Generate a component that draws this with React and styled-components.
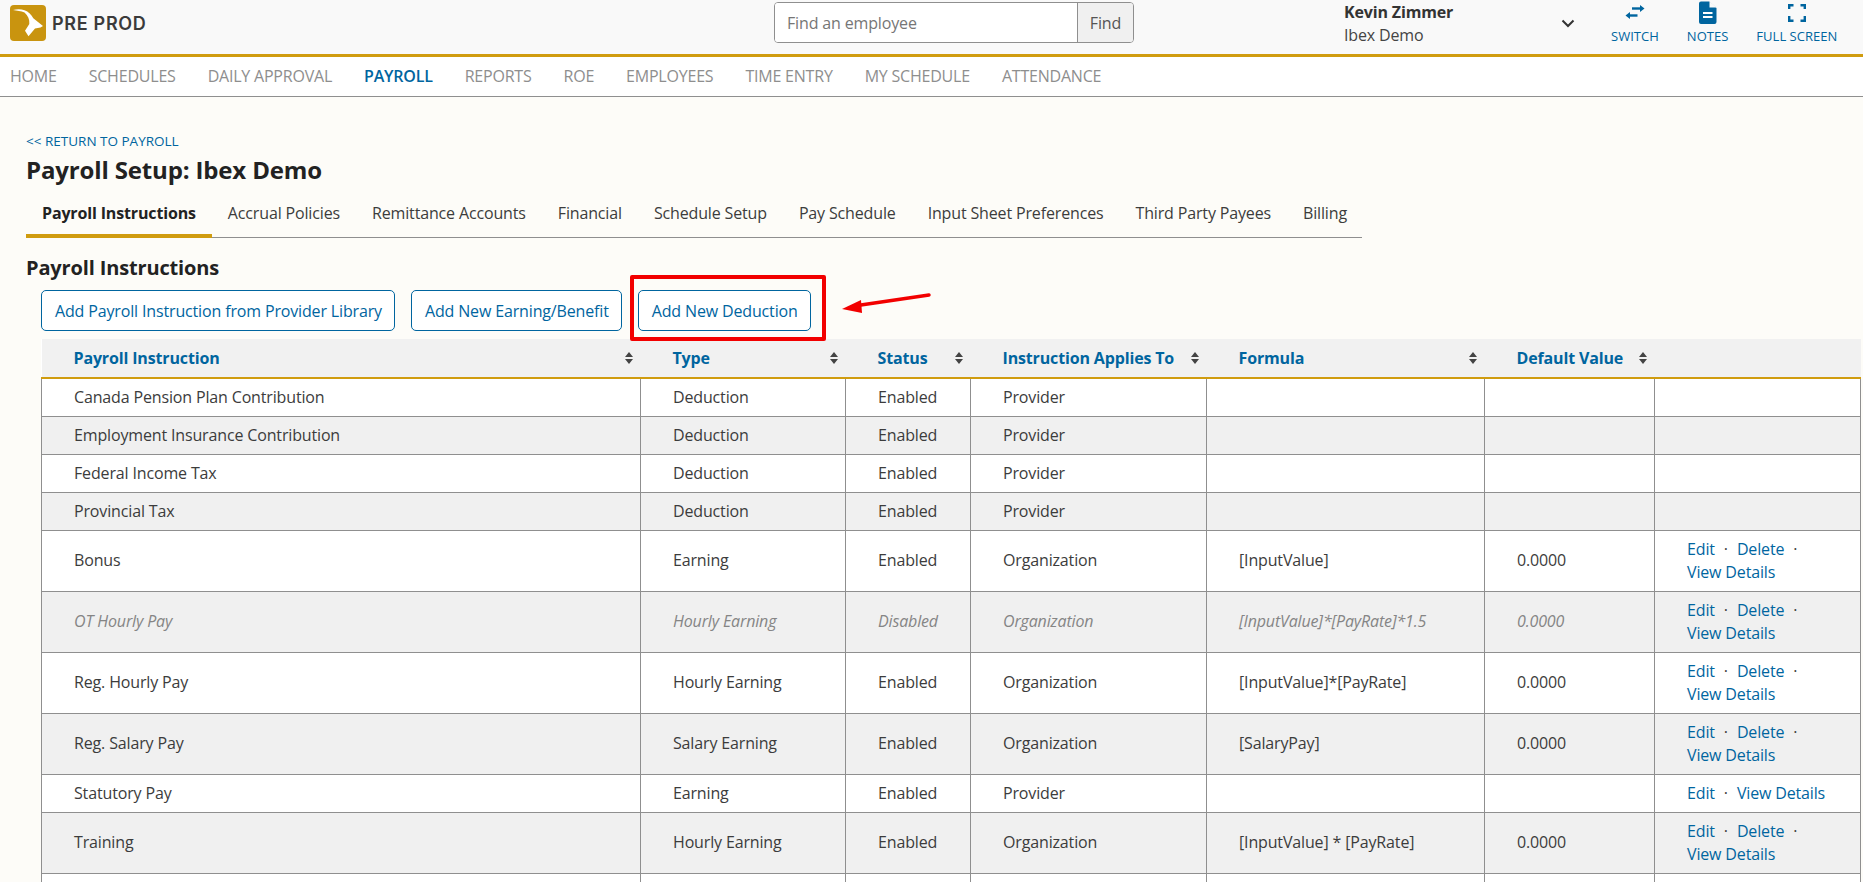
import React from 'react';
import styled, { createGlobalStyle } from 'styled-components';

const GlobalStyle = createGlobalStyle`
  html, body {
    margin: 0;
    height: 100%;
    overflow: hidden;
    background: #fdfcf8;
    font-family: "Open Sans", "Liberation Sans", sans-serif;
    font-size: 16px;
    letter-spacing: -0.15px;
    color: #3c3c3c;
  }
`;

const BLUE = '#00659f';
const GOLD = '#d09c0f';
const LINE = '#8f8f8f';

const TopBar = styled.header`
  display: grid;
  grid-template-columns: 774px 360px 441px 1fr;
  height: 54px;
  background: #f9f9f9;
  border-bottom: 3px solid ${GOLD};
`;

const Brand = styled.div`
  display: flex;
  align-items: center;
  gap: 6px;
  height: 46px;
  padding-left: 10px;
`;

const BrandName = styled.span`
  font-family: "Inter", "Open Sans", sans-serif;
  font-size: 18px;
  font-weight: 600;
  letter-spacing: 0.7px;
  color: #3b3b3b;
`;

const SearchBox = styled.form`
  display: flex;
  height: 39px;
  margin-top: 2px;
  border: 1px solid ${LINE};
  border-radius: 4px;
  overflow: hidden;
  background: #fff;
`;

const SearchInput = styled.input`
  flex: 1;
  min-width: 0;
  border: 0;
  outline: 0;
  padding: 0 12px;
  font: inherit;
  letter-spacing: inherit;
  color: #3c3c3c;
  &::placeholder {
    color: #767676;
    opacity: 1;
  }
`;

const SearchButton = styled.button`
  width: 56px;
  border: 0;
  border-left: 1px solid ${LINE};
  background: #f0f0f0;
  font: inherit;
  letter-spacing: inherit;
  color: #555;
`;

const UserBlock = styled.div`
  display: flex;
  justify-content: space-between;
  align-items: flex-start;
  padding-left: 210px;
`;

const UserName = styled.div`
  font-weight: 700;
  line-height: 23px;
  color: #333;
`;

const UserOrg = styled.div`
  line-height: 23px;
  color: #444;
`;

const UserText = styled.div`
  padding-top: 1px;
`;

const Chevron = styled.svg`
  margin-top: 19px;
`;

const Tools = styled.div`
  display: flex;
  padding-left: 36px;
`;

const Tool = styled.a`
  display: flex;
  flex-direction: column;
  align-items: center;
  margin-right: ${(p) => p.$gap}px;
  font-size: 13px;
  letter-spacing: 0.02px;
  line-height: 18px;
  color: ${BLUE};
  white-space: nowrap;
`;

const ToolIcon = styled.svg`
  display: block;
  height: 27px;
`;

const MainNav = styled.nav`
  display: flex;
  gap: 32px;
  align-items: center;
  height: 37px;
  padding: 0 0 2px 10px;
  background: #fff;
  border-bottom: 1px solid ${LINE};
`;

const NavItem = styled.a`
  font-size: 16px;
  letter-spacing: -0.21px;
  text-transform: uppercase;
  font-weight: ${(p) => (p.$active ? 600 : 400)};
  color: ${(p) => (p.$active ? BLUE : '#8e8e8e')};
`;

const Content = styled.main`
  padding: 35px 0 0 26px;
`;

const BackLink = styled.a`
  display: block;
  font-size: 13.5px;
  letter-spacing: 0;
  line-height: 18px;
  color: ${BLUE};
`;

const PageTitle = styled.h1`
  margin: 2px 0 0;
  font-size: 24px;
  line-height: 36px;
  font-weight: 700;
  color: #222;
`;

const TabBar = styled.div`
  display: flex;
  width: 1336px;
  height: 45px;
  margin-top: 4px;
  border-bottom: 1px solid ${LINE};
`;

const Tab = styled.a`
  display: flex;
  align-items: center;
  padding: 0 16px;
  margin-bottom: -1px;
  white-space: nowrap;
  font-weight: ${(p) => (p.$active ? 700 : 400)};
  color: ${(p) => (p.$active ? '#222' : '#3c3c3c')};
  border-bottom: 4px solid ${(p) => (p.$active ? GOLD : 'transparent')};
`;

const SectionTitle = styled.h2`
  margin: 16px 0 0;
  font-size: 20px;
  line-height: 28px;
  font-weight: 700;
  color: #222;
`;

const ButtonRow = styled.div`
  display: flex;
  gap: 16px;
  align-items: center;
  margin: 8px 0 0 15px;
  height: 41px;
`;

const ActionButton = styled.button`
  position: relative;
  height: 41px;
  padding: 0 12px 0 13px;
  border: 1px solid ${BLUE};
  border-radius: 5px;
  background: #fff;
  font: inherit;
  letter-spacing: inherit;
  color: ${BLUE};
  white-space: nowrap;
  ${(p) =>
    p.$marked &&
    `
    &::after {
      content: '';
      position: absolute;
      left: -9px;
      right: -16px;
      top: -16px;
      bottom: -11px;
      border: 4px solid #f20000;
      border-radius: 2px;
      pointer-events: none;
    }
  `}
`;

const Arrow = styled.svg`
  position: absolute;
  left: 838px;
  top: 289px;
`;

const Table = styled.table`
  width: 1819px;
  margin: 8px 0 0 15px;
  border-collapse: collapse;
  table-layout: fixed;
  background: #fff;
`;

const HeadRow = styled.tr`
  background: #f1f1f1;
  height: 39px;
`;

const HeadCell = styled.th`
  padding: 0 8px 0 32px;
  border-bottom: 2px solid ${GOLD};
  text-align: left;
  font-size: 16px;
  font-weight: 700;
  color: ${BLUE};
`;

const HeadInner = styled.div`
  display: flex;
  align-items: center;
  justify-content: space-between;
`;

const SortGlyph = styled.svg`
  flex: none;
`;

const Row = styled.tr`
  height: ${(p) => p.$h}px;
  background: ${(p) => (p.$alt ? '#f0f0f0' : '#fff')};
  font-style: ${(p) => (p.$off ? 'italic' : 'normal')};
  color: ${(p) => (p.$off ? '#858585' : '#3c3c3c')};
`;

const Cell = styled.td`
  padding: 0 12px 0 32px;
  border: 1px solid ${LINE};
  font-size: 16px;
  line-height: 23px;
  vertical-align: middle;
`;

const LinkText = styled.a`
  color: ${BLUE};
  font-style: normal;
`;

const Dot = styled.span`
  margin: 0 9px;
  color: #3c3c3c;
  font-style: normal;
`;

const SortIcon = () => (
  <SortGlyph width="8" height="12" viewBox="0 0 8 12">
    <path d="M4 0 8 5H0zM4 12 0 7h8z" fill="#444" />
  </SortGlyph>
);

const Logo = () => (
  <svg width="36" height="36" viewBox="0 0 36 36">
    <rect width="36" height="36" rx="4" fill="#c9940f" />
    <path
      d="M3 5C7 4 11 4 14.500 5.200 18.500 6.600 21.500 9.500 23.300 13.300L33 21 30.500 22.500 25 23.500 18.500 31.300 15 25.700 19.300 19C19.800 14.500 18 10.500 14.500 7.500 11 6 7 5.500 3 5z"
      fill="#fff"
    />
  </svg>
);

const SwitchIcon = () => (
  <ToolIcon width="20" viewBox="0 0 20 27">
    <path d="M7 8.500h9" stroke={BLUE} strokeWidth="2.400" />
    <path d="M15 5 19.500 8.500 15 12z" fill={BLUE} />
    <path d="M4 15.500h8.500" stroke={BLUE} strokeWidth="2.400" />
    <path d="M5 12 .5 15.500 5 19z" fill={BLUE} />
  </ToolIcon>
);

const NotesIcon = () => (
  <ToolIcon width="19" viewBox="0 0 19 27">
    <path
      d="M3 1.500h8.500L18.500 8v14a2 2 0 0 1-2 2H3a2 2 0 0 1-2-2V3.500a2 2 0 0 1 2-2z"
      fill={BLUE}
    />
    <path d="M11.500 1v6.500h7z" fill="#f9f9f9" />
    <path d="M5 12h9.500v2H5zM5 16h9.500v2H5z" fill="#fff" />
  </ToolIcon>
);

const FullIcon = () => (
  <ToolIcon width="18" viewBox="0 0 18 27">
    <path
      d="M1.200 9V5.200h4.300M12.500 5.200h4.300V9M16.800 16v4.800h-4.300M5.500 20.800H1.200V16"
      stroke={BLUE}
      strokeWidth="2.400"
      fill="none"
    />
  </ToolIcon>
);

const columns = [
  { label: 'Payroll Instruction', width: 599 },
  { label: 'Type', width: 205 },
  { label: 'Status', width: 125 },
  { label: 'Instruction Applies To', width: 236 },
  { label: 'Formula', width: 278 },
  { label: 'Default Value', width: 170 },
  { label: '', width: 206 },
];

const rows = [
  ['Canada Pension Plan Contribution', 'Deduction', 'Enabled', 'Provider', '', '', null, 38],
  ['Employment Insurance Contribution', 'Deduction', 'Enabled', 'Provider', '', '', null, 38],
  ['Federal Income Tax', 'Deduction', 'Enabled', 'Provider', '', '', null, 38],
  ['Provincial Tax', 'Deduction', 'Enabled', 'Provider', '', '', null, 38],
  ['Bonus', 'Earning', 'Enabled', 'Organization', '[InputValue]', '0.0000', 'full', 61],
  ['OT Hourly Pay', 'Hourly Earning', 'Disabled', 'Organization', '[InputValue]*[PayRate]*1.5', '0.0000', 'full', 61],
  ['Reg. Hourly Pay', 'Hourly Earning', 'Enabled', 'Organization', '[InputValue]*[PayRate]', '0.0000', 'full', 61],
  ['Reg. Salary Pay', 'Salary Earning', 'Enabled', 'Organization', '[SalaryPay]', '0.0000', 'full', 61],
  ['Statutory Pay', 'Earning', 'Enabled', 'Provider', '', '', 'short', 38],
  ['Training', 'Hourly Earning', 'Enabled', 'Organization', '[InputValue] * [PayRate]', '0.0000', 'full', 61],
  ['', '', '', '', '', '', null, 38],
];

const navItems = ['Home', 'Schedules', 'Daily Approval', 'Payroll', 'Reports', 'ROE', 'Employees', 'Time Entry', 'My Schedule', 'Attendance'];
const tabs = ['Payroll Instructions', 'Accrual Policies', 'Remittance Accounts', 'Financial', 'Schedule Setup', 'Pay Schedule', 'Input Sheet Preferences', 'Third Party Payees', 'Billing'];

const RowActions = ({ kind }) => {
  if (kind === 'short') {
    return (
      <>
        <LinkText>Edit</LinkText>
        <Dot>·</Dot>
        <LinkText>View Details</LinkText>
      </>
    );
  }
  if (kind === 'full') {
    return (
      <>
        <LinkText>Edit</LinkText>
        <Dot>·</Dot>
        <LinkText>Delete</LinkText>
        <Dot>·</Dot>
        <br />
        <LinkText>View Details</LinkText>
      </>
    );
  }
  return null;
};

const App = () => (
  <>
    <GlobalStyle />
    <TopBar>
      <Brand>
        <Logo />
        <BrandName>PRE PROD</BrandName>
      </Brand>
      <SearchBox onSubmit={(e) => e.preventDefault()}>
        <SearchInput placeholder="Find an employee" />
        <SearchButton>Find</SearchButton>
      </SearchBox>
      <UserBlock>
        <UserText>
          <UserName>Kevin Zimmer</UserName>
          <UserOrg>Ibex Demo</UserOrg>
        </UserText>
        <Chevron width="14" height="9" viewBox="0 0 14 9">
          <path d="M1.500 1.500 7 7l5.500-5.500" stroke="#333" strokeWidth="2" fill="none" />
        </Chevron>
      </UserBlock>
      <Tools>
        <Tool $gap={28}>
          <SwitchIcon />
          SWITCH
        </Tool>
        <Tool $gap={28}>
          <NotesIcon />
          NOTES
        </Tool>
        <Tool $gap={0}>
          <FullIcon />
          FULL SCREEN
        </Tool>
      </Tools>
    </TopBar>
    <MainNav>
      {navItems.map((item) => (
        <NavItem key={item} $active={item === 'Payroll'}>
          {item}
        </NavItem>
      ))}
    </MainNav>
    <Content>
      <BackLink>&lt;&lt; RETURN TO PAYROLL</BackLink>
      <PageTitle>Payroll Setup: Ibex Demo</PageTitle>
      <TabBar>
        {tabs.map((tab, i) => (
          <Tab key={tab} $active={i === 0}>
            {tab}
          </Tab>
        ))}
      </TabBar>
      <SectionTitle>Payroll Instructions</SectionTitle>
      <ButtonRow>
        <ActionButton>Add Payroll Instruction from Provider Library</ActionButton>
        <ActionButton>Add New Earning/Benefit</ActionButton>
        <ActionButton $marked>Add New Deduction</ActionButton>
      </ButtonRow>
      <Arrow width="96" height="26" viewBox="0 0 96 26">
        <path d="M91 6 16 17" stroke="#f20000" strokeWidth="3.500" strokeLinecap="round" />
        <path d="M4 20 23 11 24 24z" fill="#f20000" />
      </Arrow>
      <Table>
        <colgroup>
          {columns.map((c) => (
            <col key={c.label} style={{ width: c.width }} />
          ))}
        </colgroup>
        <thead>
          <HeadRow>
            {columns.map((c) => (
              <HeadCell key={c.label}>
                {c.label && (
                  <HeadInner>
                    {c.label}
                    <SortIcon />
                  </HeadInner>
                )}
              </HeadCell>
            ))}
          </HeadRow>
        </thead>
        <tbody>
          {rows.map((r, i) => (
            <Row key={i} $alt={i % 2 === 1} $off={r[2] === 'Disabled'} $h={r[7]}>
              {r.slice(0, 6).map((text, j) => (
                <Cell key={j}>{text}</Cell>
              ))}
              <Cell>
                <RowActions kind={r[6]} />
              </Cell>
            </Row>
          ))}
        </tbody>
      </Table>
    </Content>
  </>
);

export default App;
